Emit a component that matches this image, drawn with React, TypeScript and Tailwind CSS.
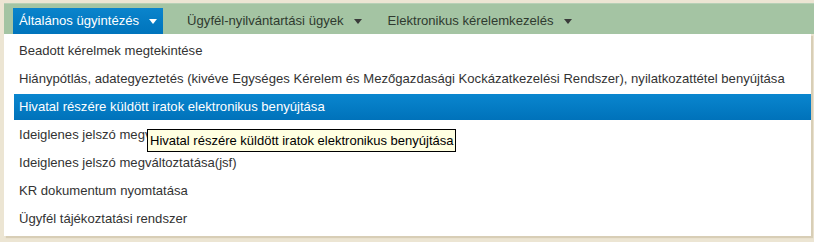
import React from "react";

const items = [
  "Beadott kérelmek megtekintése",
  "Hiánypótlás, adategyeztetés (kivéve Egységes Kérelem és Mezőgazdasági Kockázatkezelési Rendszer), nyilatkozattétel benyújtása",
  "Hivatal részére küldött iratok elektronikus benyújtása",
  "Ideiglenes jelszó megváltoztatása",
  "Ideiglenes jelszó megváltoztatása(jsf)",
  "KR dokumentum nyomtatása",
  "Ügyfél tájékoztatási rendszer",
];

const Caret = ({ className }: { className: string }) => (
  <svg width="8" height="5" viewBox="0 0 8 5" className={className}>
    <path d="M0 0h8L4 5z" fill="currentColor" />
  </svg>
);

const App: React.FC = () => {
  return (
    <div
      className="h-[242px] w-[814px] overflow-hidden bg-[#ece5d3] pl-[4px] pt-[3px] text-[13.1px] text-[#333]"
      style={{ fontFamily: '"Liberation Sans", Arial, sans-serif' }}
    >
      <nav className="flex h-[31px] items-end border-t border-[#b7d0b6] bg-[#a4c4a3] pl-[9px]">
        <div className="flex h-[26px] items-center gap-[10px] bg-gradient-to-b from-[#0a84cc] to-[#0074bc] px-[6px] text-white">
          Általános ügyintézés
          <Caret className="text-white" />
        </div>
        <div className="ml-[24px] flex h-[26px] items-center gap-[10px] text-[#2f3a2f]">
          Ügyfél-nyilvántartási ügyek
          <Caret className="text-[#3a3a3a]" />
        </div>
        <div className="ml-[26px] flex h-[26px] items-center gap-[10px] text-[#2f3a2f]">
          Elektronikus kérelemkezelés
          <Caret className="text-[#3a3a3a]" />
        </div>
      </nav>

      <div className="relative w-[807px] bg-white pb-[4px] pl-[10px] pt-[4px] shadow-[2px_2px_1px_#d8ceb6]">
        <ul className="flex flex-col gap-[2px]">
          {items.map((t, i) => (
            <li
              key={t}
              className={
                i === 2
                  ? "flex h-[26px] items-center bg-gradient-to-b from-[#0a86cf] to-[#0072ba] pl-[5px] text-white"
                  : "flex h-[26px] items-center pl-[5px]"
              }
            >
              {t}
            </li>
          ))}
        </ul>

        {/* tooltip of the hovered item */}
        <div className="absolute left-[143px] top-[95px] flex h-[23px] items-center border border-black bg-[#ffffe1] px-[2px] text-[13px] text-black">
          Hivatal részére küldött iratok elektronikus benyújtása
        </div>
      </div>
    </div>
  );
};

export default App;
